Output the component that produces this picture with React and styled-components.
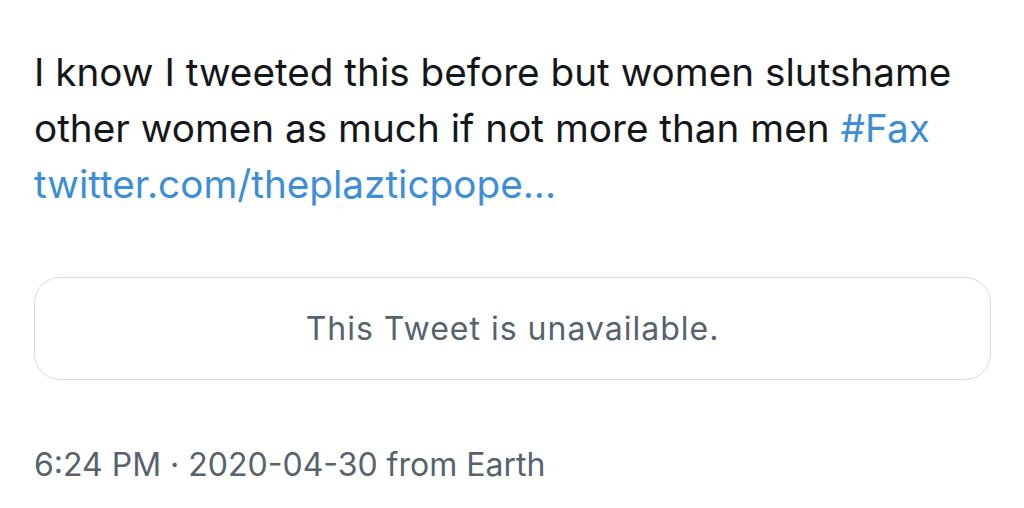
import React from 'react'
import styled, { createGlobalStyle } from 'styled-components'

const colors = {
  text: '#14171a',
  link: '#3d8ed8',
  grey: '#56636f',
  border: '#d9dde1',
}

const GlobalStyle = createGlobalStyle`
  html, body {
    margin: 0;
    padding: 0;
    background: #ffffff;
  }
  body {
    font-family: Inter, 'Open Sans', 'Liberation Sans', sans-serif;
    -webkit-font-smoothing: antialiased;
  }
`

const Container = styled.div`
  width: 1024px;
  height: 508px;
  box-sizing: border-box;
  padding: 44px 33px 0 34px;
  display: flex;
  flex-direction: column;
  overflow: hidden;
`

const Body = styled.p`
  margin: 0;
  font-size: 38.7px;
  line-height: 56px;
  color: ${colors.text};
`

const Link = styled.span`
  color: ${colors.link};
`

const QuoteCard = styled.div`
  margin-top: 65px;
  height: 103px;
  box-sizing: border-box;
  border: 1.5px solid ${colors.border};
  border-radius: 26px;
  display: flex;
  align-items: center;
  justify-content: center;
  font-size: 32px;
  letter-spacing: 1px;
  color: ${colors.grey};
`

const Meta = styled.div`
  margin-top: 65px;
  font-size: 32px;
  line-height: 40px;
  color: ${colors.grey};
`

const App = () => {
  return (
    <Container>
      <GlobalStyle />
      <Body>
        I know I tweeted this before but women slutshame
        <br />
        other women as much if not more than men <Link>#Fax</Link>
        <br />
        <Link>twitter.com/theplazticpope...</Link>
      </Body>
      <QuoteCard>This Tweet is unavailable.</QuoteCard>
      <Meta>6:24 PM · 2020-04-30 from Earth</Meta>
    </Container>
  )
}

export default App
